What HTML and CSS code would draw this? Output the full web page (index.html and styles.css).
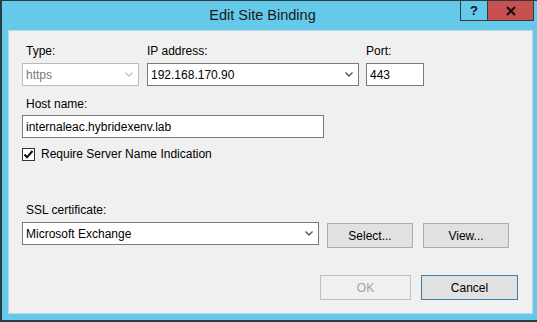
FILE: index.html
```html
<!DOCTYPE html>
<html>
<head>
<meta charset="utf-8">
<link rel="stylesheet" href="styles.css">
</head>
<body>
<div class="window">
  <div class="titlebar">
    <div class="title">Edit Site Binding</div>
    <div class="caption-buttons">
      <div class="cap-btn cap-help">?</div>
      <div class="cap-btn cap-close">
        <svg width="12" height="10" viewBox="0 0 12 10"><path d="M2 1 L10 9 M10 1 L2 9" stroke="#111" stroke-width="2.2" fill="none"/></svg>
      </div>
    </div>
  </div>
  <div class="panel">
    <div class="row-top">
      <div class="field field-type">
        <div class="label indent">Type:</div>
        <div class="combo disabled">
          <span class="combo-text">https</span>
          <svg class="chev" width="8" height="5" viewBox="0 0 8 5"><path d="M0.5 0.5 L4 4 L7.5 0.5" stroke="#c2c2c2" stroke-width="1.4" fill="none"/></svg>
        </div>
      </div>
      <div class="field field-ip">
        <div class="label">IP address:</div>
        <div class="combo">
          <span class="combo-text">192.168.170.90</span>
          <svg class="chev" width="8" height="5" viewBox="0 0 8 5"><path d="M0.5 0.5 L4 4 L7.5 0.5" stroke="#555" stroke-width="1.4" fill="none"/></svg>
        </div>
      </div>
      <div class="field field-port">
        <div class="label">Port:</div>
        <div class="textbox">443</div>
      </div>
    </div>

    <div class="label indent host-label">Host name:</div>
    <div class="textbox host-box">internaleac.hybridexenv.lab</div>

    <div class="check-row">
      <div class="checkbox">
        <svg width="11" height="11" viewBox="0 0 11 11"><path d="M1.5 5.5 L4 8.2 L9.5 2" stroke="#111" stroke-width="2" fill="none"/></svg>
      </div>
      <span class="check-label">Require Server Name Indication</span>
    </div>

    <div class="label indent ssl-label">SSL certificate:</div>
    <div class="ssl-row">
      <div class="combo ssl-combo">
        <span class="combo-text">Microsoft Exchange</span>
        <svg class="chev" width="8" height="5" viewBox="0 0 8 5"><path d="M0.5 0.5 L4 4 L7.5 0.5" stroke="#555" stroke-width="1.4" fill="none"/></svg>
      </div>
      <div class="btn btn-select">Select...</div>
      <div class="btn btn-view">View...</div>
    </div>

    <div class="footer">
      <div class="btn btn-ok">OK</div>
      <div class="btn btn-cancel">Cancel</div>
    </div>
  </div>
</div>
</body>
</html>
```

FILE: styles.css
```css
html, body {
  margin: 0;
  padding: 0;
}
body {
  width: 537px;
  height: 322px;
  overflow: hidden;
  font-family: "Liberation Sans", Arial, sans-serif;
  font-size: 12px;
  color: #000;
}
.window {
  box-sizing: border-box;
  width: 537px;
  height: 322px;
  background: #65c9e9;
  border-left: 2px solid #2c3a42;
  border-top: 1px solid #2c3a42;
  border-bottom: 2px solid #2c3a42;
}
.titlebar {
  display: flex;
  align-items: flex-start;
  height: 29px;
  padding-right: 3px;
}
.title {
  flex: 1;
  text-align: center;
  padding-left: 63px;
  font-size: 14.5px;
  line-height: 28px;
  color: #1a1a1a;
}
.caption-buttons {
  display: flex;
}
.cap-btn {
  box-sizing: border-box;
  height: 20px;
  display: flex;
  align-items: center;
  justify-content: center;
  border-bottom: 1px solid #2c3a42;
  border-right: 1px solid #2c3a42;
}
.cap-help {
  width: 28px;
  border-left: 1px solid #2c3a42;
  font-weight: bold;
  font-size: 13px;
  color: #111;
}
.cap-close {
  width: 46px;
  background: #c75050;
}
.panel {
  box-sizing: border-box;
  width: 525px;
  height: 284px;
  margin-left: 6px;
  background: #f0f0f0;
  border: 1px solid #bcd6e2;
  padding: 13px 0 0 13px;
}
.row-top {
  display: flex;
}
.field-type { width: 117px; margin-right: 8px; }
.field-ip { width: 212px; margin-right: 7px; }
.field-port { width: 58px; }
.label {
  line-height: 15px;
  margin-bottom: 4px;
  white-space: nowrap;
}
.indent {
  padding-left: 4px;
}
.combo, .textbox {
  box-sizing: border-box;
  height: 23px;
  border: 1px solid #7a7a7a;
  background: #fff;
  display: flex;
  align-items: center;
  padding: 0 3px;
  white-space: nowrap;
}
.combo-text {
  flex: 1;
}
.chev {
  margin-right: 2px;
}
.combo.disabled {
  border-color: #bcbcbc;
  color: #7a7a7a;
}
.host-label {
  margin-top: 11px;
  margin-bottom: 3px;
}
.host-box {
  width: 302px;
}
.check-row {
  display: flex;
  align-items: center;
  margin-top: 10px;
  height: 13px;
}
.checkbox {
  box-sizing: border-box;
  width: 13px;
  height: 13px;
  border: 1px solid #333;
  background: #fff;
  display: flex;
  align-items: center;
  justify-content: center;
}
.check-label {
  margin-left: 6px;
  line-height: 15px;
}
.ssl-label {
  margin-top: 42px;
}
.ssl-row {
  display: flex;
  align-items: flex-start;
}
.ssl-combo {
  width: 297px;
}
.btn {
  box-sizing: border-box;
  height: 25px;
  background: #e1e1e1;
  border: 1px solid #adadad;
  display: flex;
  align-items: center;
  justify-content: center;
}
.btn-select {
  width: 86px;
  margin-left: 8px;
  margin-top: 1px;
}
.btn-view {
  width: 86px;
  margin-left: 10px;
  margin-top: 1px;
}
.footer {
  display: flex;
  justify-content: flex-end;
  margin-top: 27px;
  margin-right: 14px;
}
.btn-ok {
  width: 91px;
  background: #f0f0f0;
  border-color: #bfbfbf;
  color: #a3a3a3;
}
.btn-cancel {
  width: 97px;
  margin-left: 10px;
  border-color: #3c7fb1;
}
```
